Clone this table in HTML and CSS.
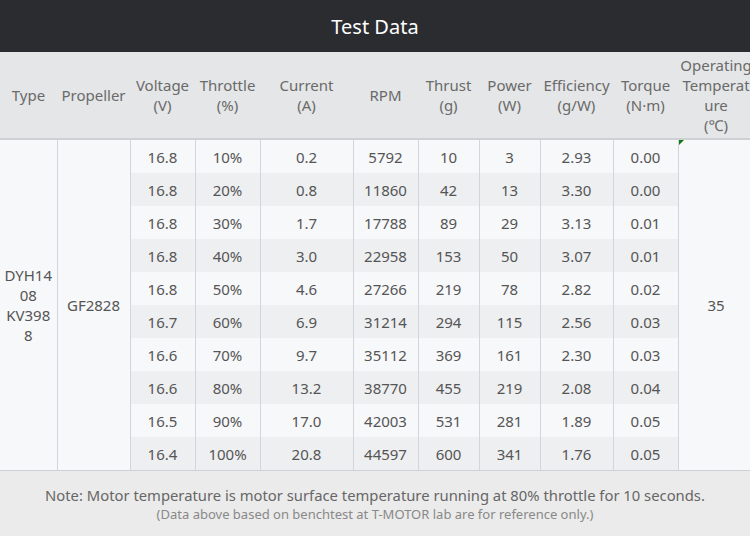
FILE: index.html
```html
<!DOCTYPE html>
<html>
<head>
<meta charset="utf-8">
<link rel="stylesheet" href="styles.css">
</head>
<body>
<div class="page">
  <div class="title-bar">Test Data</div>
  <div class="table-wrap">
    <table class="data">
      <colgroup>
        <col class="c-type"><col class="c-prop"><col class="c-volt"><col class="c-thr"><col class="c-cur"><col class="c-rpm"><col class="c-thrust"><col class="c-pow"><col class="c-eff"><col class="c-tor"><col class="c-temp">
      </colgroup>
      <thead>
        <tr>
          <th>Type</th><th>Propeller</th><th>Voltage<br>(V)</th><th>Throttle<br>(%)</th><th>Current<br>(A)</th><th>RPM</th><th>Thrust<br>(g)</th><th>Power<br>(W)</th><th>Efficiency<br>(g/W)</th><th>Torque<br>(N·m)</th><th class="wrap">Operating Temperature<br>(℃)</th>
        </tr>
      </thead>
      <tbody>
        <tr class="odd"><td rowspan="10" class="merged type">DYH1408 KV3988</td><td rowspan="10" class="merged">GF2828</td><td>16.8</td><td>10%</td><td>0.2</td><td>5792</td><td>10</td><td>3</td><td>2.93</td><td>0.00</td><td rowspan="10" class="merged temp"><span class="marker"></span>35</td></tr>
        <tr class="even"><td>16.8</td><td>20%</td><td>0.8</td><td>11860</td><td>42</td><td>13</td><td>3.30</td><td>0.00</td></tr>
        <tr class="odd"><td>16.8</td><td>30%</td><td>1.7</td><td>17788</td><td>89</td><td>29</td><td>3.13</td><td>0.01</td></tr>
        <tr class="even"><td>16.8</td><td>40%</td><td>3.0</td><td>22958</td><td>153</td><td>50</td><td>3.07</td><td>0.01</td></tr>
        <tr class="odd"><td>16.8</td><td>50%</td><td>4.6</td><td>27266</td><td>219</td><td>78</td><td>2.82</td><td>0.02</td></tr>
        <tr class="even"><td>16.7</td><td>60%</td><td>6.9</td><td>31214</td><td>294</td><td>115</td><td>2.56</td><td>0.03</td></tr>
        <tr class="odd"><td>16.6</td><td>70%</td><td>9.7</td><td>35112</td><td>369</td><td>161</td><td>2.30</td><td>0.03</td></tr>
        <tr class="even"><td>16.6</td><td>80%</td><td>13.2</td><td>38770</td><td>455</td><td>219</td><td>2.08</td><td>0.04</td></tr>
        <tr class="odd"><td>16.5</td><td>90%</td><td>17.0</td><td>42003</td><td>531</td><td>281</td><td>1.89</td><td>0.05</td></tr>
        <tr class="even"><td>16.4</td><td>100%</td><td>20.8</td><td>44597</td><td>600</td><td>341</td><td>1.76</td><td>0.05</td></tr>
      </tbody>
    </table>
  </div>
  <div class="note">
    <p class="note-main">Note: Motor temperature is motor surface temperature running at 80% throttle for 10 seconds.</p>
    <p class="note-sub">(Data above based on benchtest at T-MOTOR lab are for reference only.)</p>
  </div>
</div>
</body>
</html>
```
FILE: styles.css
```css
html, body {
  margin: 0;
  padding: 0;
  background: #ebebeb;
}
body {
  font-family: "Noto Sans", "Noto Sans CJK SC", sans-serif;
  color: #555;
}
.page {
  width: 750px;
  height: 536px;
  overflow: hidden;
  display: flex;
  flex-direction: column;
}
.title-bar {
  height: 52px;
  flex: none;
  background: #2b2c30;
  color: #fff;
  font-size: 20px;
  display: flex;
  align-items: center;
  justify-content: center;
}
.table-wrap {
  width: 750px;
  overflow: hidden;
  flex: none;
}
.data {
  table-layout: fixed;
  width: 754px;
  border-collapse: collapse;
  font-size: 15px;
}
.c-type { width: 57px; }
.c-prop { width: 73px; }
.c-volt { width: 65px; }
.c-thr { width: 65px; }
.c-cur { width: 93px; }
.c-rpm { width: 65px; }
.c-thrust { width: 61px; }
.c-pow { width: 61px; }
.c-eff { width: 73px; }
.c-tor { width: 65px; }
.c-temp { width: 76px; }
.data th {
  background: #e4e6e7;
  color: #6a6a6a;
  font-weight: normal;
  line-height: 20px;
  height: 87px;
  padding: 0 2px;
  border-bottom: 2px solid #cfd0d4;
  text-align: center;
  vertical-align: middle;
  box-sizing: border-box;
}
.data th.wrap {
  overflow-wrap: anywhere;
}
.data td {
  height: 33px;
  padding: 0 4px;
  text-align: center;
  vertical-align: middle;
  border-left: 1px solid #d4d5dc;
  border-right: 1px solid #d4d5dc;
  line-height: 20px;
}
.data tbody tr:last-child td {
  border-bottom: 1px solid #d0d1d6;
}
.data tr.odd td { background: #f7f8fa; }
.data tr.even td { background: #eeeff1; }
.data td.merged {
  background: #f7f8fa;
  border-bottom: 1px solid #d0d1d6;
}
.data td.type {
  border-left: none;
  overflow-wrap: anywhere;
}
.data td.temp {
  position: relative;
}
.marker {
  position: absolute;
  left: 0;
  top: 0;
  width: 0;
  height: 0;
  border-top: 5px solid #117711;
  border-right: 5px solid transparent;
}
.note {
  flex: 1;
  background: #ebebeb;
  text-align: center;
  padding-top: 13px;
}
.note p { margin: 0; }
.note-main {
  font-size: 14.8px;
  line-height: 22px;
  color: #666;
}
.note-sub {
  font-size: 13px;
  line-height: 16px;
  color: #888;
}
```
